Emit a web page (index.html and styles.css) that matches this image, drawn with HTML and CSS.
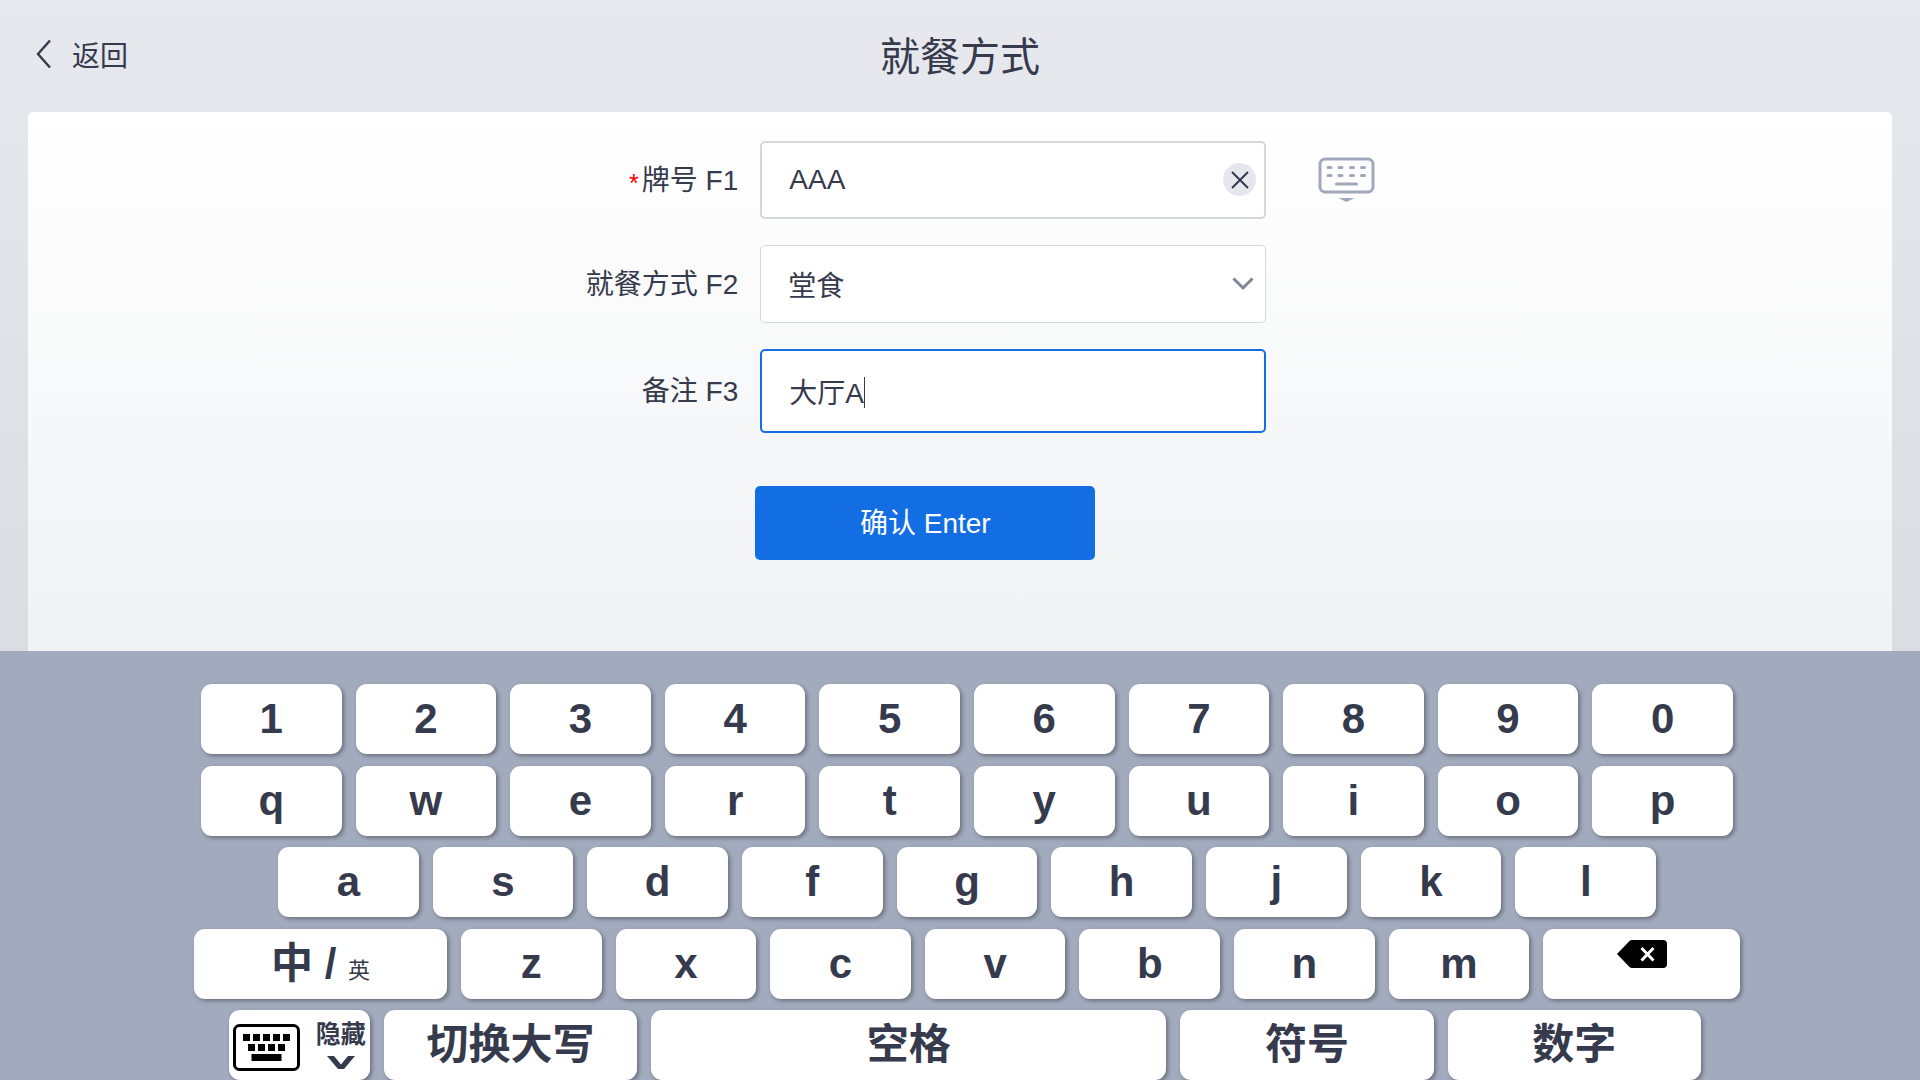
FILE: index.html
```
<!DOCTYPE html>
<html lang="zh-CN">
<head>
    <meta charset="UTF-8">
    <meta name="viewport" content="width=device-width, initial-scale=1.0">
    <title>就餐方式</title>
    <link rel="stylesheet" href="styles.css">
</head>
<body>
    <header class="header">
        <a class="back" href="#">
            <svg width="15" height="28" viewBox="0 0 15 28"><path d="M14 0.500 L2 14 L14 27.500" fill="none" stroke="#363a4d" stroke-width="2.400"/></svg>
            返回
        </a>
        <h1>就餐方式</h1>
    </header>

    <main class="card">
        <form class="form">
            <div class="item">
                <label for="tableNo"><span class="required">*</span>牌号 F1</label>
                <div class="field">
                    <input type="text" id="tableNo" class="box thick" value="AAA">
                    <button type="button" class="clear" aria-label="清除">
                        <svg width="18" height="18" viewBox="0 0 18 18"><path d="M1 1 L17 17 M17 1 L1 17" stroke="#363a4d" stroke-width="2"/></svg>
                    </button>
                </div>
                <button type="button" class="toggle" aria-label="键盘">
                    <svg width="58" height="46" viewBox="0 0 58 46">
                        <rect x="2" y="2" width="53" height="33" rx="5" fill="none" stroke="#a1a8bb" stroke-width="3"/>
                        <g stroke="#a1a8bb" stroke-width="3" stroke-linecap="round">
                            <path d="M10 10.500h3M21 10.500h3M32.500 10.500h3M43.500 10.500h3"/>
                            <path d="M10 18.500h3M21 18.500h3M32.500 18.500h3M43.500 18.500h3"/>
                            <path d="M18.500 27h20"/>
                        </g>
                        <path d="M20.500 41h16l-8 4z" fill="#a1a8bb"/>
                    </svg>
                </button>
            </div>

            <div class="item">
                <label for="mode">就餐方式 F2</label>
                <div class="field">
                    <select id="mode" class="box">
                        <option>堂食</option>
                    </select>
                    <svg class="arrow" width="22" height="14" viewBox="0 0 22 14"><path d="M1.500 1.500 L11 11 L20.500 1.500" fill="none" stroke="#808797" stroke-width="3"/></svg>
                </div>
            </div>

            <div class="item">
                <label for="remark">备注 F3</label>
                <div class="field">
                    <input type="text" id="remark" class="box active" value="大厅A">
                    <span class="caret"></span>
                </div>
            </div>

            <div class="item submit">
                <button type="submit" class="confirm">确认 Enter</button>
            </div>
        </form>
    </main>

    <section class="keyboard">
        <div class="row">
            <button class="key">1</button>
            <button class="key">2</button>
            <button class="key">3</button>
            <button class="key">4</button>
            <button class="key">5</button>
            <button class="key">6</button>
            <button class="key">7</button>
            <button class="key">8</button>
            <button class="key">9</button>
            <button class="key">0</button>
        </div>
        <div class="row">
            <button class="key">q</button>
            <button class="key">w</button>
            <button class="key">e</button>
            <button class="key">r</button>
            <button class="key">t</button>
            <button class="key">y</button>
            <button class="key">u</button>
            <button class="key">i</button>
            <button class="key">o</button>
            <button class="key">p</button>
        </div>
        <div class="row row-a">
            <button class="key">a</button>
            <button class="key">s</button>
            <button class="key">d</button>
            <button class="key">f</button>
            <button class="key">g</button>
            <button class="key">h</button>
            <button class="key">j</button>
            <button class="key">k</button>
            <button class="key">l</button>
        </div>
        <div class="row row-z">
            <button class="key wide cn">中 / <span class="small">英</span></button>
            <button class="key">z</button>
            <button class="key">x</button>
            <button class="key">c</button>
            <button class="key">v</button>
            <button class="key">b</button>
            <button class="key">n</button>
            <button class="key">m</button>
            <button class="key delete" aria-label="删除">
                <svg width="50" height="28" viewBox="0 0 50 28">
                    <path d="M0 14 L12.500 1 Q13.500 0 15 0 H46 Q50 0 50 4 V24 Q50 28 46 28 H15 Q13.500 28 12.500 27 Z"/>
                    <path d="M24.500 8 L36.500 20.500 M36.500 8 L24.500 20.500" stroke="#fff" stroke-width="3"/>
                </svg>
            </button>
        </div>
        <div class="row row-space">
            <button class="key hide">
                <svg width="67" height="47" viewBox="0 0 67 47">
                    <rect x="1.500" y="1.500" width="64" height="44" rx="5" fill="none" stroke="#000" stroke-width="3"/>
                    <path d="M10 10h7v7h-7zM20 10h7v7h-7zM30 10h7v7h-7zM40 10h7v7h-7zM50 10h7v7h-7zM15 20h7v7h-7zM25 20h7v7h-7zM35 20h7v7h-7zM45 20h7v7h-7zM18.500 30h30v7h-30z"/>
                </svg>
                <span class="hide-text">
                    隐藏
                    <svg width="28" height="13" viewBox="0 0 28 13"><path d="M0 0h7l7 8.500l7-8.500h7l-11 13h-6z" fill="#363a4d"/></svg>
                </span>
            </button>
            <button class="key wide cn">切换大写</button>
            <button class="key space cn">空格</button>
            <button class="key wide cn">符号</button>
            <button class="key wide cn">数字</button>
        </div>
    </section>
</body>
</html>
```
FILE: styles.css
```
* {
    box-sizing: border-box;
}

body {
    margin: 0;
    min-height: 100vh;
    display: flex;
    flex-direction: column;
    font-family: "Liberation Sans", "Noto Sans CJK SC", sans-serif;
    font-size: 28px;
    color: #363a4d;
    background: linear-gradient(#e8e9ee, #d3d4da);
}

button, input, select {
    font-family: inherit;
    font-size: inherit;
    color: inherit;
}

button {
    padding: 0;
    border: none;
    background: none;
    cursor: pointer;
}

.header {
    display: grid;
    grid-template-columns: 1fr auto 1fr;
    align-items: center;
    height: 112px;
    padding: 0 36px 4px;
}

.back {
    display: flex;
    align-items: center;
    gap: 21px;
    color: inherit;
    text-decoration: none;
}

h1 {
    margin: 0;
    font-size: 40px;
    font-weight: normal;
}

.card {
    flex: 1;
    margin: 0 28px;
    padding-top: 29px;
    border-radius: 5px 5px 0 0;
    background: linear-gradient(#fff, #f1f2f4);
}

.item {
    display: flex;
    align-items: center;
    margin-bottom: 26px;
}

.item label {
    width: calc(38% + 2px);
    margin-right: 22px;
    padding-bottom: 4px;
    text-align: right;
}

.required {
    color: #f00;
    font-size: 25px;
    margin-right: 3px;
    vertical-align: -2px;
    line-height: 1;
}

.field {
    position: relative;
    width: 506px;
}

.box {
    display: block;
    width: 100%;
    height: 78px;
    padding: 0 27px;
    border: 1px solid #d6d7dd;
    border-radius: 5px;
    background-color: #fff;
    outline: none;
    appearance: none;
}

select.box {
    padding-top: 4px;
}

.thick {
    border-width: 2px;
}

.active {
    height: 84px;
    border: 2px solid #136ee4;
}

.clear {
    position: absolute;
    top: 22px;
    right: 10px;
    display: flex;
    align-items: center;
    justify-content: center;
    width: 33px;
    height: 33px;
    border-radius: 50%;
    background-color: #e6e7ed;
}

.arrow {
    position: absolute;
    top: 32px;
    right: 12px;
    pointer-events: none;
}

.caret {
    position: absolute;
    top: 28px;
    left: 104px;
    width: 1px;
    height: 31px;
    background-color: #363a4d;
}

.toggle {
    display: flex;
    margin-left: 52px;
}

.submit {
    margin-top: 53px;
    padding-left: calc(38% + 19px);
}

.confirm {
    width: 340px;
    height: 74px;
    padding-bottom: 5px;
    border-radius: 5px;
    background-color: #136ee4;
    color: #fff;
}

.keyboard {
    display: flex;
    flex-direction: column;
    justify-content: space-between;
    height: 429px;
    padding-top: 33px;
    background-color: #a2aabd;
}

/* rows sit a little right of centre, one key gap more on the left */
.row {
    display: flex;
    gap: 14px;
    padding: 0 187px 0 201px;
}

.row-a {
    padding: 0 264px 0 278px;
}

.row-z {
    padding: 0 180px 0 194px;
}

.row-space {
    padding: 0 219px 0 229px;
}

.key {
    flex: 100 1 0;
    min-width: 0;
    height: 70px;
    border-radius: 11px;
    background-color: #fff;
    box-shadow: 2px 2px 4px rgba(0, 0, 0, 0.35);
    font-size: 42px;
    font-weight: bold;
}

.wide {
    flex-grow: 180;
}

.space {
    flex-grow: 366;
}

.cn {
    padding-bottom: 10px;
}

.small {
    font-size: 22px;
    font-weight: normal;
}

.delete {
    flex-grow: 140;
    display: flex;
    justify-content: center;
    padding-top: 11px;
}

.hide {
    display: flex;
    align-items: center;
    justify-content: center;
    gap: 16px;
    padding-top: 4px;
}

.hide-text {
    display: flex;
    flex-direction: column;
    align-items: center;
    gap: 8px;
    padding-bottom: 6px;
    font-size: 25px;
    line-height: 28px;
}
```
